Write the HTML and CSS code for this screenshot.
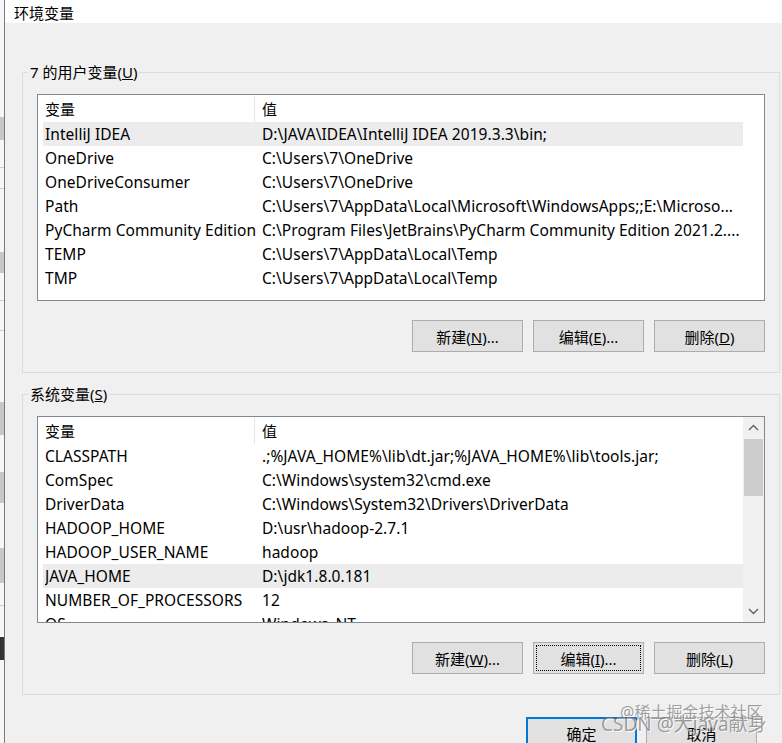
FILE: index.html
```html
<!DOCTYPE html>
<html lang="zh-CN">
<head>
    <meta charset="UTF-8">
    <meta name="viewport" content="width=device-width, initial-scale=1.0">
    <title>环境变量</title>
    <link rel="stylesheet" href="styles.css">
</head>
<body>
<div class="screen">
    <!-- window behind the dialog -->
    <div class="behind"></div>

    <div class="dialog">
        <div class="titlebar">环境变量</div>

        <div class="client">
            <!-- user variables -->
            <fieldset class="group">
                <legend>7 的用户变量(<u>U</u>)</legend>
                <div class="list">
                    <div class="list-body">
                        <div class="list-head">
                            <div class="head-cell">变量</div>
                            <div class="head-cell">值</div>
                        </div>
                        <div class="row selected"><span>IntelliJ IDEA</span><span>D:\JAVA\IDEA\IntelliJ IDEA 2019.3.3\bin;</span></div>
                        <div class="row"><span>OneDrive</span><span>C:\Users\7\OneDrive</span></div>
                        <div class="row"><span>OneDriveConsumer</span><span>C:\Users\7\OneDrive</span></div>
                        <div class="row"><span>Path</span><span>C:\Users\7\AppData\Local\Microsoft\WindowsApps;;E:\Microso...</span></div>
                        <div class="row"><span>PyCharm Community Edition</span><span>C:\Program Files\JetBrains\PyCharm Community Edition 2021.2....</span></div>
                        <div class="row"><span>TEMP</span><span>C:\Users\7\AppData\Local\Temp</span></div>
                        <div class="row"><span>TMP</span><span>C:\Users\7\AppData\Local\Temp</span></div>
                    </div>
                    <div class="scroll-space"></div>
                </div>
                <div class="buttons">
                    <button>新建(<u>N</u>)...</button>
                    <button>编辑(<u>E</u>)...</button>
                    <button>删除(<u>D</u>)</button>
                </div>
            </fieldset>

            <!-- system variables -->
            <fieldset class="group">
                <legend>系统变量(<u>S</u>)</legend>
                <div class="list">
                    <div class="list-body">
                        <div class="list-head">
                            <div class="head-cell">变量</div>
                            <div class="head-cell">值</div>
                        </div>
                        <div class="row"><span>CLASSPATH</span><span>.;%JAVA_HOME%\lib\dt.jar;%JAVA_HOME%\lib\tools.jar;</span></div>
                        <div class="row"><span>ComSpec</span><span>C:\Windows\system32\cmd.exe</span></div>
                        <div class="row"><span>DriverData</span><span>C:\Windows\System32\Drivers\DriverData</span></div>
                        <div class="row"><span>HADOOP_HOME</span><span>D:\usr\hadoop-2.7.1</span></div>
                        <div class="row"><span>HADOOP_USER_NAME</span><span>hadoop</span></div>
                        <div class="row selected"><span>JAVA_HOME</span><span>D:\jdk1.8.0.181</span></div>
                        <div class="row"><span>NUMBER_OF_PROCESSORS</span><span>12</span></div>
                        <div class="row"><span>OS</span><span>Windows_NT</span></div>
                    </div>
                    <div class="scrollbar">
                        <div class="scroll-btn">
                            <svg width="11" height="7" viewBox="0 0 11 7"><polyline points="1,6 5.5,1.5 10,6" fill="none" stroke="#606060" stroke-width="1.4"/></svg>
                        </div>
                        <div class="thumb"></div>
                        <div class="track"></div>
                        <div class="scroll-btn">
                            <svg width="11" height="7" viewBox="0 0 11 7"><polyline points="1,1 5.5,5.5 10,1" fill="none" stroke="#606060" stroke-width="1.4"/></svg>
                        </div>
                    </div>
                </div>
                <div class="buttons">
                    <button>新建(<u>W</u>)...</button>
                    <button class="focus">编辑(<u>I</u>)...</button>
                    <button>删除(<u>L</u>)</button>
                </div>
            </fieldset>

            <div class="dialog-buttons">
                <button class="default">确定</button>
                <button>取消</button>
            </div>
        </div>
    </div>

    <!-- image watermark -->
    <div class="watermark">
        <span class="wm-top">@稀土掘金技术社区</span>
        <span class="wm-bottom">CSDN @大java献身</span>
    </div>
</div>
</body>
</html>
```

FILE: styles.css
```css
* {
    box-sizing: border-box;
}
html, body {
    margin: 0;
    padding: 0;
}
body {
    width: 782px;
    height: 743px;
    overflow: hidden;
    font-family: "Noto Sans", "Noto Sans CJK SC", sans-serif;
    font-size: 15px;
    color: #000;
    background-color: #f0f0f0;
}
.screen {
    position: relative;
    display: flex;
    width: 782px;
    height: 743px;
}
.behind {
    flex: none;
    width: 4px;
    background: linear-gradient(to bottom,
        #f7f7f7 0 117px, #c8c8c8 117px 140px, #f7f7f7 140px 167px,
        #d0d0d0 167px 168px, #f7f7f7 168px 188px, #d0d0d0 188px 189px,
        #f7f7f7 189px 252px, #c8c8c8 252px 273px, #f7f7f7 273px 300px,
        #d0d0d0 300px 301px, #f7f7f7 301px 330px, #d0d0d0 330px 331px,
        #f7f7f7 331px 402px, #c8c8c8 402px 435px, #f7f7f7 435px 472px,
        #c8c8c8 472px 503px, #f7f7f7 503px 548px, #c8c8c8 548px 583px,
        #f7f7f7 583px 605px, #d0d0d0 605px 606px, #f7f7f7 606px 637px,
        #333 637px 660px, #f7f7f7 660px);
}
.dialog {
    flex: 1;
    display: flex;
    flex-direction: column;
    border-left: 1px solid #7a7a7a;
    background-color: #f0f0f0;
}
.titlebar {
    height: 32px;
    padding: 3px 0 0 9px;
    line-height: 20px;
    background-color: #fff;
}
.client {
    padding: 39px 2px 0 17px;
}
.group {
    margin: 0;
    min-width: 0;
    padding: 12px 14px 20px;
    border: 1px solid #dcdcdc;
}
.group + .group {
    margin-top: 11px;
}
legend {
    margin-left: -9px;
    padding: 0 2px;
    line-height: 20px;
}
.list {
    display: grid;
    grid-template-columns: 1fr 21px;
    height: 207px;
    overflow: hidden;
    border: 1px solid #828790;
    background-color: #fff;
}
.list-body {
    overflow: hidden;
}
.list-head {
    display: grid;
    grid-template-columns: 217px 1fr;
    height: 27px;
    padding-top: 1px;
    line-height: 26px;
}
.head-cell {
    padding-left: 7px;
}
.head-cell:first-child {
    border-right: 1px solid #e5e5e5;
}
.row {
    display: grid;
    grid-template-columns: 217px 1fr;
    height: 24px;
    margin-left: 5px;
    padding: 1px 0 0 2px;
    font-size: 15.5px;
    letter-spacing: 0.05px;
    line-height: 23px;
    white-space: nowrap;
}
.row span {
    overflow: hidden;
}
.row.selected {
    background-color: #ececec;
}
.scrollbar {
    display: flex;
    flex-direction: column;
    background-color: #f0f0f0;
}
.scroll-btn {
    height: 21px;
    display: flex;
    align-items: center;
    justify-content: center;
}
.scroll-btn svg {
    display: block;
}
.thumb {
    height: 57px;
    margin: 1px 1px 0;
    background-color: #cdcdcd;
}
.track {
    flex: 1;
}
.buttons {
    display: flex;
    justify-content: flex-end;
    gap: 10px;
    margin-top: 19px;
}
button {
    width: 111px;
    height: 32px;
    padding: 0;
    font: inherit;
    color: #000;
    border: 1px solid #adadad;
    background-color: #e1e1e1;
}
button.focus {
    outline: 1px dotted #000;
    outline-offset: -4px;
}
.dialog-buttons {
    display: flex;
    justify-content: flex-end;
    gap: 9px;
    margin-top: 22px;
    padding-right: 23px;
}
button.default {
    border: 2px solid #0078d7;
}
.watermark {
    position: absolute;
    left: 600px;
    top: 699px;
    width: 182px;
    height: 44px;
    color: rgba(110, 110, 110, 0.65);
    text-shadow: 1px 1px 0 rgba(255, 255, 255, 0.8);
    white-space: nowrap;
}
.wm-top {
    position: absolute;
    left: 20px;
    top: 0;
    font-size: 16px;
}
.wm-bottom {
    position: absolute;
    left: 1px;
    top: 10px;
    font-size: 19px;
}
```
